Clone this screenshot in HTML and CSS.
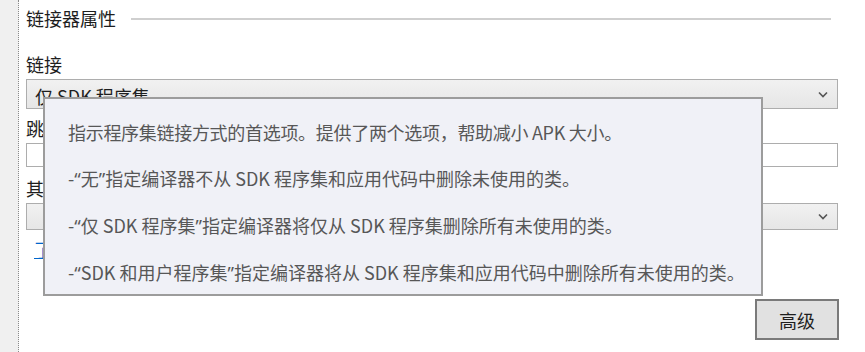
FILE: index.html
```html
<!DOCTYPE html>
<html lang="zh">
<head>
<meta charset="utf-8">
<link rel="stylesheet" href="styles.css">
</head>
<body>
<div class="page">
  <div class="gutter"></div>
  <div class="content">
    <div class="header">
      <span class="title">链接器属性</span>
      <span class="rule"></span>
    </div>
    <div class="label first">链接</div>
    <div class="select">
      <span class="value">仅 SDK 程序集</span>
      <svg class="chev" width="10" height="7" viewBox="0 0 10 7"><polyline points="1,1.5 5,5.5 9,1.5" fill="none" stroke="#555" stroke-width="1.6"/></svg>
    </div>
    <div class="label second">跳过链接程序集</div>
    <div class="textbox"></div>
    <div class="label third">其他 mtouch 参数</div>
    <div class="select short">
      <span class="value"></span>
      <svg class="chev" width="10" height="7" viewBox="0 0 10 7"><polyline points="1,1.5 5,5.5 9,1.5" fill="none" stroke="#555" stroke-width="1.6"/></svg>
    </div>
    <div class="link">了解更多</div>
    <div class="actions">
      <button class="btn">高级</button>
    </div>
  </div>
  <div class="tooltip">
    <p class="intro">指示程序集链接方式的首选项。提供了两个选项，帮助减小 APK 大小。</p>
    <p>-<span class="q">“</span>无<span class="q">”</span>指定编译器不从 SDK 程序集和应用代码中删除未使用的类。</p>
    <p>-<span class="q">“</span>仅 SDK 程序集<span class="q">”</span>指定编译器将仅从 SDK 程序集删除所有未使用的类。</p>
    <p>-<span class="q">“</span>SDK 和用户程序集<span class="q">”</span>指定编译器将从 SDK 程序集和应用代码中删除所有未使用的类。</p>
  </div>
</div>
</body>
</html>
```

FILE: styles.css
```css
* { box-sizing: border-box; }
html, body { margin: 0; padding: 0; background: #fff; }
body {
  font-family: "Noto Sans CJK SC", "Noto Sans", sans-serif;
  color: #1e1e1e;
  width: 865px;
  height: 352px;
  overflow: hidden;
}
.page {
  position: relative;
  display: flex;
  height: 352px;
}
.gutter {
  width: 19px;
  flex: none;
  background: #f0f0f0;
  border-right: 1px dotted #8a8a8a;
}
.content {
  flex: 1;
  display: flex;
  flex-direction: column;
  padding: 5px 27px 0 7px;
}
.header {
  display: flex;
  align-items: center;
  height: 26px;
  gap: 15px;
}
.title {
  font-size: 18px;
  line-height: 26px;
  white-space: nowrap;
}
.rule {
  flex: 1;
  height: 2px;
  background: #cfcfcf;
  margin-right: 7px;
  margin-top: 1px;
}
.label {
  font-size: 18px;
  line-height: 26px;
  height: 26px;
  white-space: nowrap;
}
.label.first { margin-top: 20px; }
.label.second { margin-top: 6px; }
.label.third { margin-top: 8px; }
.select {
  margin-top: 2px;
  height: 30px;
  border: 1px solid #adadad;
  background: linear-gradient(#f1f1f1, #e6e6e6);
  display: flex;
  align-items: center;
  justify-content: space-between;
  padding: 0 9px 0 8px;
}
.select.short { height: 27px; }
.select .value {
  font-size: 18px;
  line-height: 26px;
  padding-top: 4px;
}
.chev { flex: none; }
.textbox {
  margin-top: 2px;
  height: 24px;
  border: 1px solid #adadad;
  background: #fff;
}
.link {
  margin-top: 6px;
  padding-left: 8px;
  font-size: 18px;
  line-height: 26px;
  color: #0066cc;
  text-decoration: underline;
}
.actions {
  display: flex;
  justify-content: flex-end;
  margin-top: 37px;
}
.btn {
  width: 84px;
  height: 41px;
  margin-right: -1px;
  border: 2px solid #7a7a7a;
  background: #e1e1e1;
  font-family: "Noto Sans CJK SC", sans-serif;
  font-size: 18px;
  color: #1e1e1e;
  padding: 0;
}
.tooltip {
  position: absolute;
  left: 43px;
  top: 97px;
  width: 720px;
  height: 199px;
  background: #f0f1f7;
  border: 2px solid #9c9c9c;
  padding: 10px 10px 0 23px;
  color: #575757;
  font-size: 18px;
}
.tooltip p {
  margin: 0;
  line-height: 46px;
  white-space: nowrap;
}
.tooltip p.intro {
  letter-spacing: -0.3px;
}
.tooltip .q {
  font-family: "Noto Sans", sans-serif;
}
```
